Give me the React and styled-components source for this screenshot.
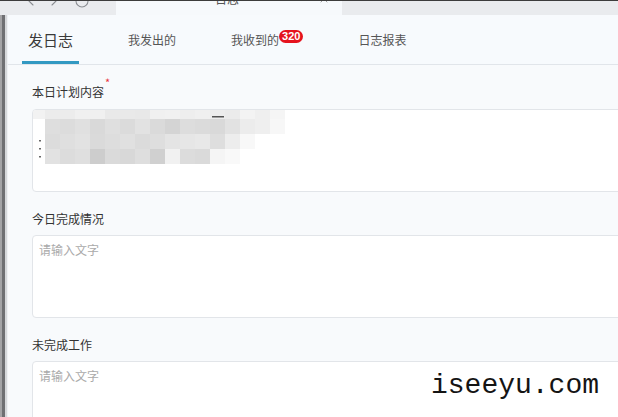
import React from 'react';
import styled, { createGlobalStyle } from 'styled-components';
import { ChevronLeft, ChevronRight, RotateCw, X } from 'lucide-react';

const GlobalStyle = createGlobalStyle`
  html, body {
    margin: 0;
    padding: 0;
    overflow: hidden;
    background: #f8fafc;
  }
  body {
    font-family: "Noto Sans CJK SC", "Noto Sans", sans-serif;
  }
`;

const tabs = [
  { name: '发日志', active: true },
  { name: '我发出的' },
  { name: '我收到的', badge: 320 },
  { name: '日志报表' },
];

const mosaicRows = [
  { y: 110, h: 10, c: ['#ececec', '#ececec', '#f0f0f0', '#f0f0f0', '#e9e9e9', '#e9e9e9', '#e8e8e8', '#f0f0f0', '#f1f1f1', '#eeeeee', '#f0f0f0', '#ededed', '#ebebeb', '#f3f3f3', '#efefef', '#f5f5f5'] },
  { y: 120, h: 15, c: ['#dedede', '#dcdcdc', '#e0e0e0', '#d9d9d9', '#dfdfdf', '#dbdbdb', '#e2e2e2', '#dadada', '#d4d4d4', '#dddddd', '#dbdbdb', '#d9d9d9', '#e2e2e2', '#ececec', '#efefef', '#f7f7f7'] },
  { y: 135, h: 15, c: ['#dcdcdc', '#dfdfdf', '#e2e2e2', '#dadada', '#dddddd', '#e0e0e0', '#dbdbdb', '#dedede', '#e4e4e4', '#e6e6e6', '#e8e8e8', '#dedede', '#ededed', '#f8f8f8', '#ffffff', '#ffffff'] },
  { y: 150, h: 15, c: ['#e2e2e2', '#dcdcdc', '#dfdfdf', '#cdcdcd', '#dadada', '#d8d8d8', '#dedede', '#d0d0d0', '#f1f1f1', '#dcdcdc', '#dadada', '#f5f5f5', '#f9f9f9', '#ffffff', '#ffffff', '#ffffff'] },
];

const Page = styled.div`
  position: relative;
  width: 618px;
  height: 417px;
  overflow: hidden;
  display: flex;
  flex-direction: column;
  background: #f8fafc;
  border-top: 1px solid #3c3c3c;
  box-sizing: border-box;
`;

const ChromeBar = styled.div`
  height: 14px;
  display: flex;
  overflow: hidden;
  background: #e9ebee;
  flex-shrink: 0;
`;

const NavArea = styled.div`
  width: 116px;
  display: flex;
  align-items: flex-start;
  gap: 7px;
  padding-left: 23px;
  box-sizing: border-box;
  color: #8a8d92;
  svg {
    margin-top: -8px;
  }
`;

const BrowserTab = styled.div`
  width: 226px;
  background: #f6f9fc;
  display: flex;
  align-items: flex-start;
  justify-content: space-between;
  padding: 0 12px 0 99px;
  box-sizing: border-box;
  font-size: 12px;
  line-height: 14px;
  color: #555;
  span {
    margin-top: -9px;
  }
  svg {
    margin-top: -8px;
    color: #888;
  }
`;

const Body = styled.div`
  flex: 1;
  display: flex;
  min-height: 0;
`;

const LeftRail = styled.div`
  width: 8px;
  flex-shrink: 0;
  background: linear-gradient(to right, #a4a4a6 0 2px, #6f7073 2px 5px, #d6d8db 5px 7px, #eef1f4 7px);
`;

const Main = styled.div`
  flex: 1;
  display: flex;
  flex-direction: column;
  min-width: 0;
`;

const TabBar = styled.div`
  height: 49px;
  display: flex;
  gap: 43px;
  padding-left: 14px;
  background: #f7fafd;
  border-bottom: 1px solid #e1e5ea;
  flex-shrink: 0;
`;

const Tab = styled.div`
  display: flex;
  align-items: center;
  padding: 3px 6px 0;
  font-size: ${(p) => (p.$active ? '15px' : '12px')};
  color: ${(p) => (p.$active ? '#3a3a3a' : '#555')};
  border-bottom: 3px solid ${(p) => (p.$active ? '#3399c2' : 'transparent')};
  box-sizing: border-box;
`;

const Badge = styled.span`
  display: inline-block;
  margin-top: -6px;
  padding: 0 3px;
  height: 13px;
  line-height: 13px;
  border-radius: 7px;
  background: #e5121d;
  color: #fff;
  font-family: "Liberation Sans", Arial, sans-serif;
  font-weight: bold;
  font-size: 11px;
`;

const Form = styled.div`
  display: flex;
  flex-direction: column;
  gap: 18px;
  padding: 18px 0 0 24px;
`;

const Field = styled.div`
  display: flex;
  flex-direction: column;
  align-items: flex-start;
  gap: 8px;
`;

const Label = styled.div`
  font-size: 12px;
  line-height: 17px;
  color: #333;
`;

const Required = styled.span`
  position: relative;
  top: -10px;
  margin-left: 1px;
  color: #e8333c;
  font-size: 11px;
`;

const Box = styled.div`
  width: 640px;
  height: 83px;
  background: #fff;
  border: 1px solid #e2e5e9;
  border-radius: 4px;
  box-sizing: border-box;
  padding: 5px 6px;
  font-size: 12px;
  line-height: 17px;
  color: #aaa;
  overflow: hidden;
`;

const Mosaic = styled.svg`
  display: block;
  margin: -6px 0 0 -7px;
`;

const Watermark = styled.div`
  position: absolute;
  left: 431px;
  top: 367px;
  font-family: "Liberation Mono", "Courier New", monospace;
  font-size: 28px;
  line-height: 36px;
  color: #141414;
`;

function BlurredText() {
  return (
    <Mosaic width="260" height="58" viewBox="32 110 260 58">
      {mosaicRows.map((row, r) =>
        row.c.map((color, i) => (
          <rect key={`${r}-${i}`} x={45 + i * 15} y={row.y} width="15" height={row.h} fill={color} />
        ))
      )}
      <rect x="33" y="111" width="12" height="9" fill="#f2f2f2" />
      <rect x="212" y="117" width="12" height="1.5" fill="#555" />
      <rect x="39" y="141" width="2" height="1.5" fill="#666" />
      <rect x="39" y="149" width="2" height="1.5" fill="#666" />
      <rect x="39" y="157" width="2" height="1.5" fill="#666" />
    </Mosaic>
  );
}

export default function App() {
  return (
    <>
      <GlobalStyle />
      <Page>
        <ChromeBar>
          <NavArea>
            <ChevronLeft size={16} strokeWidth={1.6} />
            <ChevronRight size={16} strokeWidth={1.6} />
            <RotateCw size={16} strokeWidth={1.6} style={{ marginLeft: 5 }} />
          </NavArea>
          <BrowserTab>
            <span>日志</span>
            <X size={12} strokeWidth={1.6} />
          </BrowserTab>
        </ChromeBar>
        <Body>
          <LeftRail />
          <Main>
            <TabBar>
              {tabs.map((t) => (
                <Tab key={t.name} $active={t.active}>
                  {t.name}
                  {t.badge && <Badge>{t.badge}</Badge>}
                </Tab>
              ))}
            </TabBar>
            <Form>
              <Field>
                <Label>
                  本日计划内容<Required>*</Required>
                </Label>
                <Box>
                  <BlurredText />
                </Box>
              </Field>
              <Field>
                <Label>今日完成情况</Label>
                <Box>请输入文字</Box>
              </Field>
              <Field>
                <Label>未完成工作</Label>
                <Box>请输入文字</Box>
              </Field>
            </Form>
          </Main>
        </Body>
        <Watermark>iseeyu.com</Watermark>
      </Page>
    </>
  );
}
